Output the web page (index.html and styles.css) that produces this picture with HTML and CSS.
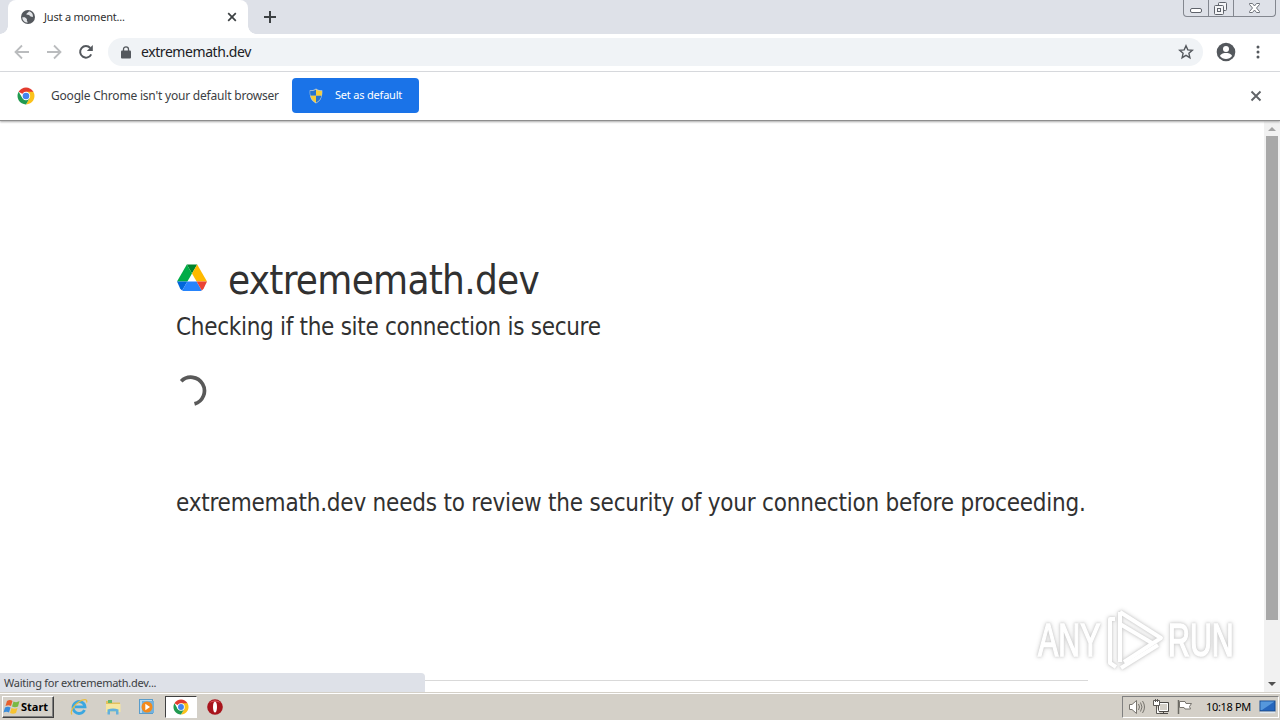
FILE: index.html
```
<!DOCTYPE html>
<html lang="en">
<head>
  <meta charset="UTF-8" />
  <title>Just a moment...</title>
  <link rel="stylesheet" href="styles.css">
</head>
<body>

  <!-- Tab strip -->
  <div class="tab-strip">
    <div class="tab-edge"></div>
    <div class="tab">
      <svg class="tab-icon" width="16" height="16" viewBox="0 0 16 16">
        <circle cx="8" cy="8" r="7" fill="#54585d"/>
        <path d="M2.300 8.300h2.600l2 1.600v1.800l1 1.900c-3.200.2-5.500-2-5.600-5.300zM9 2.300c-.2 1.400-2.600 1.600-2.700 3.200l2.700.4 1.600 1.700 2.300.4c.5-2.900-1.300-5-3.900-5.700z" fill="#e3e5e8"/>
      </svg>
      <span class="tab-title">Just a moment...</span>
      <svg class="tab-close" width="10" height="10" viewBox="0 0 10 10"><path d="M1.200 1.200l7.600 7.600M8.800 1.200L1.200 8.800" stroke="#3c4043" stroke-width="1.700"/></svg>
    </div>
    <div class="tab-edge right"></div>
    <svg class="new-tab" width="14" height="14" viewBox="0 0 14 14"><path d="M7 1v12M1 7h12" stroke="#3c4043" stroke-width="2"/></svg>
    <div class="window-buttons">
      <div class="win-btn min"><svg width="24" height="16" viewBox="0 0 24 16"><rect x="6.500" y="8.500" width="11" height="4" rx="1.500" fill="#fff" stroke="#5f636b"/></svg></div>
      <div class="win-btn max"><svg width="24" height="16" viewBox="0 0 24 16"><g fill="#f4f5f7" stroke="#5f636b"><rect x="9.500" y="2.500" width="8" height="8" rx="1"/><rect x="5.500" y="5.500" width="9" height="9" rx="1"/><rect x="8.500" y="8.500" width="3" height="3"/></g></svg></div>
      <div class="win-btn close"><svg width="41" height="16" viewBox="0 0 41 16"><path d="M15.500 3.500h3l2 2.500 2-2.500h3v1l-3 3.500 3 3.500v1h-3l-2-2.500-2 2.500h-3v-1l3-3.500-3-3.500z" fill="#fff" stroke="#6f737a"/></svg></div>
    </div>
  </div>

  <!-- Toolbar -->
  <div class="toolbar">
    <svg class="nav" width="16" height="16" viewBox="0 0 16 16"><path d="M15 8H2M8 1.500L1.500 8 8 14.500" fill="none" stroke="#babcbe" stroke-width="1.800"/></svg>
    <svg class="nav" width="16" height="16" viewBox="0 0 16 16"><path d="M1 8h13M8 1.500L14.500 8 8 14.500" fill="none" stroke="#babcbe" stroke-width="1.800"/></svg>
    <svg class="nav" width="16" height="16" viewBox="0 0 16 16"><path d="M13.200 10.300A5.800 5.800 0 1 1 12.300 4" fill="none" stroke="#54585d" stroke-width="2"/><path d="M14.800 1v6H8.800z" fill="#54585d"/></svg>
    <div class="address-bar">
      <svg width="10" height="13" viewBox="0 0 10 13"><rect y="4.500" width="10" height="8" rx="1" fill="#54585d"/><path d="M2.500 5V3.300a2.500 2.500 0 0 1 5 0V5" fill="none" stroke="#54585d" stroke-width="1.300"/></svg>
      <span class="url">extrememath.dev</span>
      <svg class="star" width="16" height="16" viewBox="0 0 16 16"><path d="M8 1.800l1.800 4.100 4.500.4-3.400 3 1 4.400L8 11.400l-3.900 2.300 1-4.400-3.400-3 4.500-.4z" fill="none" stroke="#54585d" stroke-width="1.400"/></svg>
    </div>
    <svg class="profile" width="20" height="20" viewBox="0 0 20 20"><circle cx="10" cy="10" r="9.300" fill="#54585d"/><circle cx="10" cy="7" r="3" fill="#fff"/><path d="M4 14c1-2.600 4-3 6-3s5 .4 6 3c-1.400 2-3.600 3-6 3s-4.600-1-6-3z" fill="#fff"/></svg>
    <svg class="menu" width="4" height="14" viewBox="0 0 4 14"><g fill="#54585d"><circle cx="2" cy="2" r="1.500"/><circle cx="2" cy="7" r="1.500"/><circle cx="2" cy="12" r="1.500"/></g></svg>
  </div>

  <!-- Default browser bar -->
  <div class="infobar">
    <svg class="chrome-logo" width="18" height="18" viewBox="0 0 18 18">
      <path d="M9 9L1.640 4.750A8.500 8.500 0 0 1 16.360 4.750z" fill="#e33b2e"/>
      <path d="M9 4.750h7.360A8.500 8.500 0 0 1 9 17.500l3.680-6.380z" fill="#fbc21b"/>
      <path d="M1.640 4.750L5.320 11.120 9 13.250v4.250A8.500 8.500 0 0 1 1.640 4.750z" fill="#219a50"/>
      <path d="M9 17.500l3.680-6.380L9 12 5.320 11.120z" fill="#219a50"/>
      <circle cx="9" cy="9" r="4.200" fill="#fff"/><circle cx="9" cy="9" r="3.300" fill="#4384ee"/>
    </svg>
    <span class="info-text">Google Chrome isn't your default browser</span>
    <button class="default-btn">
      <svg width="14" height="16" viewBox="0 0 14 16">
        <path d="M7 .5C5 2 3 2.300.700 2.300c-.3 6 1 10.500 6.300 13.200 5.300-2.700 6.600-7.200 6.300-13.200C11 2.300 9 2 7 .5z" fill="#c3cfd0"/>
        <path d="M7 1.500v6.300H1.500c-.4-1.500-.3-3-.3-4.700C3.500 3 5.500 2.600 7 1.500z" fill="#2674cf"/>
        <path d="M7 1.500c1.500 1.100 3.500 1.500 5.800 1.600 0 1.700.1 3.200-.3 4.700H7zM7 7.800H1.500C2.200 10.700 4 13 7 14.800z" fill="#f5cd38"/>
        <path d="M7 7.800h5.500C11.800 10.700 10 13 7 14.800z" fill="#2674cf"/>
      </svg>
      <span class="btn-text">Set as default</span>
    </button>
    <svg class="info-close" width="12" height="12" viewBox="0 0 12 12"><path d="M1.500 1.500l9 9M10.500 1.500l-9 9" stroke="#606367" stroke-width="1.900"/></svg>
  </div>

  <!-- Page -->
  <div class="viewport">
    <div class="page">
      <div class="site">
        <svg class="site-icon" width="32" height="32" viewBox="0 0 32 32">
          <path d="M10.800 2.500h10.400L16 11.500z" fill="#00832d"/>
          <path d="M10.800 2.500L1 19.500h10.400L16 11.500z" fill="#00ac47"/>
          <path d="M21.200 2.500L31 19.500H20.600L16 11.500z" fill="#ffba00"/>
          <path d="M1 19.500h10.400l-5.200 9Q4.800 27.800 4 26.200z" fill="#0066da"/>
          <path d="M11.400 19.500h9.200l5.200 9Q25 29 23 29H9q-2 0-2.800-.5z" fill="#2684fc"/>
          <path d="M20.600 19.500H31l-3.200 6.700q-.8 1.600-2 2.300z" fill="#ea4335"/>
        </svg>
        <h1>extrememath.dev</h1>
      </div>
      <h2>Checking if the site connection is secure</h2>
      <svg class="spinner" width="32" height="32" viewBox="0 0 32 32"><path d="M5.200 6.200A13.600 13.600 0 1 1 18.500 28.900" fill="none" stroke="#595959" stroke-width="3.700"/></svg>
      <p class="message">extrememath.dev needs to review the security of your connection before proceeding.</p>
      <div class="footer-line"></div>
    </div>
    <div class="scrollbar">
      <div class="arrow up"></div>
      <div class="thumb"></div>
      <div class="arrow down"></div>
    </div>
    <div class="status">Waiting for extrememath.dev...</div>
    <div class="watermark">
      <span class="any">ANY</span>
      <svg width="60" height="66" viewBox="0 0 60 66"><g fill="none" stroke="#fff" stroke-width="4" stroke-linejoin="round"><path d="M14 5v50M14 5l41 26-37 24M14 17l32 19"/><path d="M9 12H4v44l6 4M15 61l37-23"/></g></svg>
      <span class="run">RUN</span>
    </div>
  </div>

  <!-- Taskbar -->
  <div class="taskbar">
    <div class="start">
      <svg width="18" height="16" viewBox="0 0 18 16"><path d="M4 2q3-2 5.500 0L8 7Q5.500 5.500 2.500 7z" fill="#e8602c"/><path d="M10.500 2.500q3 1.500 6-.5L15 7.500q-3 1.500-6 0z" fill="#79b943"/><path d="M2 8.500q3-1.500 5.500 0L6 13.500Q3.500 12 .5 13.500z" fill="#3b8ddb"/><path d="M8.500 9q3 1.500 6 0L13 14q-3 1.500-6 0z" fill="#f7c331"/></svg>
      <span>Start</span>
    </div>
    <div class="task"><svg width="18" height="18" viewBox="0 0 18 18"><path d="M14.500 12A6 6 0 1 1 15 8.800H5" fill="none" stroke="#3ba7e0" stroke-width="2.800"/><path d="M2 16.500C-.5 14 4 7 9 3.800 13 1 18 .3 16.500 4.500" fill="none" stroke="#e9bd3e" stroke-width="1.200"/></svg></div>
    <div class="task"><svg width="18" height="18" viewBox="0 0 18 18"><path d="M2 3h5l1 1.500h8V14H2z" fill="#e3c15c"/><path d="M4 2h4v3H4z" fill="#65b76a"/><path d="M2 6h14.500v8H2z" fill="#f6e6a0"/><path d="M3.500 16.500v-5q5.500-2 11 0v5h-2.500v-3H6v3z" fill="#63b1dc"/></svg></div>
    <div class="task"><svg width="18" height="18" viewBox="0 0 18 18"><rect x="1.500" y="1.500" width="13" height="14" fill="#b8d9ef" stroke="#5a9dcb"/><rect x="4" y="3" width="12" height="12" fill="#72b2de"/><circle cx="9" cy="9" r="5.500" fill="#f38a1d"/><path d="M7.300 5.800v6.400L12 9z" fill="#fff"/></svg></div>
    <div class="task active"><svg width="16" height="16" viewBox="0 0 18 18">
      <path d="M9 9L1.640 4.750A8.500 8.500 0 0 1 16.360 4.750z" fill="#e33b2e"/>
      <path d="M9 4.750h7.360A8.500 8.500 0 0 1 9 17.500l3.680-6.380z" fill="#fbc21b"/>
      <path d="M1.640 4.750L5.320 11.120 9 13.250v4.250A8.500 8.500 0 0 1 1.640 4.750z" fill="#219a50"/>
      <path d="M9 17.500l3.680-6.380L9 12 5.320 11.120z" fill="#219a50"/>
      <circle cx="9" cy="9" r="4.200" fill="#fff"/><circle cx="9" cy="9" r="3.300" fill="#4384ee"/>
    </svg></div>
    <div class="task"><svg width="18" height="18" viewBox="0 0 18 18"><circle cx="9" cy="9" r="7.800" fill="#a8141c"/><path d="M3 5a8 8 0 0 1 12 0q-6-3-12 0z" fill="#d9545a"/><ellipse cx="9" cy="9" rx="2" ry="5.500" fill="#fff"/></svg></div>
    <div class="tray">
      <svg width="18" height="16" viewBox="0 0 18 16"><path d="M1.500 5.500H4L8.500 1.500v13L4 10.500H1.500z" fill="#fff" stroke="#77746e"/><path d="M10.500 5q2 3 0 6M12.500 3.500q3 4.500 0 9M14.500 2q4 6 0 12" fill="none" stroke="#77746e"/></svg>
      <svg width="17" height="16" viewBox="0 0 17 16"><path d="M5.500 3.500h10v9h-10z" fill="#d4d0c8" stroke="#4b4945"/><path d="M6 14.500h9M10.500 12.500v2" stroke="#4b4945"/><path d="M6.500 4.500h8v7h-8z" fill="none" stroke="#fff"/><path d="M.5 1.500h6v5h-6zM3.500 6.500v8h3" fill="#fff" stroke="#5b5955"/><path d="M2.500 0v3M4.500 0v3" stroke="#5b5955"/></svg>
      <svg width="17" height="16" viewBox="0 0 17 16"><path d="M1.500 1v14" stroke="#6b6963" stroke-width="1.500"/><path d="M2.500 2.500H8l1 2h5.500l-2 3 1 2.500H8L7 8.500H2.500z" fill="#fff" stroke="#77746e"/></svg>
      <span class="clock">10:18 PM</span>
      <svg width="17" height="16" viewBox="0 0 17 16"><rect x="1" y="2" width="15" height="10" fill="#2666bd" stroke="#174a8d"/><path d="M1.500 2.500h14L3 11H1.500z" fill="#5597dc"/><path d="M1 13.500h15" stroke="#dde6ee" stroke-width="1.500"/></svg>
    </div>
  </div>

</body>
</html>
```
FILE: styles.css
```
* {
  box-sizing: border-box;
}

body {
  margin: 0;
  width: 1280px;
  height: 720px;
  overflow: hidden;
  display: flex;
  flex-direction: column;
  font-family: Tahoma, 'Noto Sans', sans-serif;
  background: #fff;
  color: #313131;
}

svg {
  display: block;
  flex-shrink: 0;
}

span {
  white-space: nowrap;
}

.tab-strip {
  height: 34px;
  background: #dee1e8;
  display: flex;
  align-items: center;
}

.tab-edge {
  width: 8px;
  height: 34px;
  background: radial-gradient(circle at 0 26px, #dee1e8 7.5px, #fff 8px);
  clip-path: inset(26px 0 0 0);
}

.tab-edge.right {
  background: radial-gradient(circle at 8px 26px, #dee1e8 7.5px, #fff 8px);
}

.tab {
  width: 240px;
  height: 34px;
  background: #fff;
  border-radius: 8px 8px 0 0;
  display: flex;
  align-items: center;
  padding: 0 11px 0 12px;
}

.tab-title {
  margin: 0 0 2px 8px;
  font-size: 11px;
  letter-spacing: -0.2px;
}

.tab-close {
  margin-left: auto;
}

.new-tab {
  margin-left: 7px;
}

.window-buttons {
  margin: 0 4px 0 auto;
  height: 17px;
  align-self: flex-start;
  display: flex;
  border: 1px solid #83878f;
  border-top: none;
  border-radius: 0 0 4px 4px;
}

.win-btn {
  border-left: 1px solid #83878f;
}

.win-btn.min {
  border-left: none;
}

.toolbar {
  height: 38px;
  display: flex;
  align-items: center;
  padding: 0 20px 1px 14px;
  border-bottom: 1px solid #dadce0;
}

.nav {
  margin-right: 16px;
}

.address-bar {
  width: 1095px;
  height: 28px;
  margin-left: -2px;
  padding: 0 9px 0 13px;
  border-radius: 14px;
  background: #f0f3f6;
  display: flex;
  align-items: center;
}

.url {
  margin: 0 0 2px 10px;
  font-size: 14px;
  letter-spacing: -0.42px;
  color: #202124;
}

.star {
  margin-left: auto;
}

.profile {
  margin-left: 13px;
}

.menu {
  margin-left: auto;
}

.infobar {
  height: 49px;
  display: flex;
  align-items: center;
  padding: 0 18px 1px 17px;
  border-bottom: 1px solid #8e8e8e;
  box-shadow: 0 1px 2px #aaa;
  position: relative;
  z-index: 1;
}

.info-text {
  width: 228px;
  margin: 0 0 1px 16px;
  font-size: 12px;
  letter-spacing: -0.2px;
  color: #3c4043;
}

.default-btn {
  margin-left: 13px;
  width: 127px;
  height: 35px;
  padding: 0 0 0 17px;
  border: none;
  border-radius: 4px;
  background: #1a73e8;
  color: #fff;
  display: flex;
  align-items: center;
  font-family: inherit;
}

.btn-text {
  margin: 0 0 2px 12px;
  font-size: 11px;
  letter-spacing: -0.2px;
}

.info-close {
  margin-left: auto;
}

.viewport {
  height: 571px;
  position: relative;
  display: flex;
}

.page {
  width: 1264px;
  padding: 131px 176px 0;
  font-family: Tahoma, 'DejaVu Sans Condensed', 'DejaVu Sans', sans-serif;
}

.site {
  height: 52px;
  display: flex;
  align-items: center;
}

h1, h2, p {
  margin: 0;
  font-weight: 400;
  white-space: nowrap;
}

h1 {
  margin: 3px 0 0 20px;
  font-size: 40px;
  line-height: 52px;
  letter-spacing: -0.72px;
}

h2 {
  margin-top: 5px;
  font-size: 24px;
  line-height: 36px;
  letter-spacing: -0.3px;
}

.spinner {
  margin-top: 30px;
}

.message {
  margin-top: 78px;
  font-size: 24px;
  line-height: 36px;
  letter-spacing: -0.21px;
}

.footer-line {
  margin-top: 159px;
  border-top: 1px solid #d9d9d9;
}

.scrollbar {
  width: 16px;
  background: #f1f1f1;
  display: flex;
  flex-direction: column;
  align-items: center;
  padding: 6px 0;
}

.arrow {
  border: 4px solid transparent;
  border-top: none;
  border-bottom: 4px solid #a3a3a3;
}

.arrow.down {
  margin-top: auto;
  border-bottom: none;
  border-top: 4px solid #505050;
}

.thumb {
  width: 12px;
  height: 484px;
  margin-top: 5px;
  background: #a8a8a8;
}

.status {
  position: absolute;
  left: 0;
  bottom: 0;
  width: 425px;
  height: 19px;
  padding-left: 4px;
  border-radius: 0 4px 0 0;
  background: #dee1e8;
  color: #3c4043;
  font-size: 11px;
  letter-spacing: -0.25px;
  line-height: 19px;
}

/* semi-transparent logo over the page */
.watermark {
  position: absolute;
  left: 1038px;
  top: 486px;
  width: 196px;
  height: 66px;
  display: flex;
  align-items: center;
  color: #fff;
  font-family: 'Liberation Sans', sans-serif;
  font-size: 46px;
  -webkit-text-stroke: 1.5px #fff;
  filter: drop-shadow(0 0 1px #ccc) drop-shadow(0 0 2px #d5d5d5);
}

.watermark span {
  width: 64px;
  transform: scaleX(0.66);
  transform-origin: left;
}

.watermark svg {
  margin: 0 2px 0 4px;
}

.taskbar {
  height: 28px;
  background: #d4d0c8;
  box-shadow: inset 0 1px #d4d0c8, inset 0 2px #fff;
  display: flex;
  align-items: center;
  padding: 2px 1px 0 2px;
}

.start {
  width: 52px;
  height: 22px;
  margin-right: 9px;
  display: flex;
  align-items: center;
  border: 1px solid;
  border-color: #fff #404040 #404040 #fff;
  box-shadow: inset -1px -1px #808080;
  color: #000;
  font-size: 11px;
  font-weight: 700;
}

.start span {
  margin-bottom: 1px;
}

.task {
  width: 32px;
  height: 22px;
  margin-right: 2px;
  display: flex;
  align-items: center;
  justify-content: center;
}

.task.active {
  border: 1px solid;
  border-color: #404040 #fff #fff #404040;
  background: #fff;
}

.tray {
  width: 157px;
  height: 22px;
  margin-left: auto;
  padding: 0 2px 0 5px;
  display: flex;
  align-items: center;
  border: 1px solid;
  border-color: #808080 #fff #fff #808080;
}

.tray svg {
  margin-right: 7px;
}

.tray svg:last-child {
  margin: 0 0 0 auto;
}

.clock {
  margin: 0 0 1px 5px;
  color: #000;
  font-size: 11px;
  letter-spacing: -0.35px;
}
```
